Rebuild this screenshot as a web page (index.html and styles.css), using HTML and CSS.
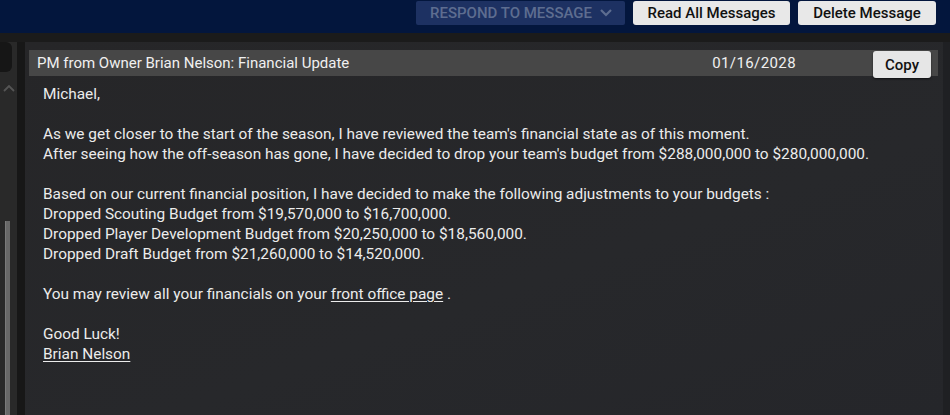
FILE: index.html
```html
<!DOCTYPE html>
<html>
<head>
<meta charset="utf-8">
<link rel="stylesheet" href="styles.css">
</head>
<body>
<div class="topbar">
  <div class="respond">
    <span class="respond-label">RESPOND TO MESSAGE</span>
    <svg class="chev" width="14" height="10" viewBox="0 0 14 10"><path d="M2 2 L7 7 L12 2" fill="none" stroke="#5d6d90" stroke-width="2.2"/></svg>
  </div>
  <button class="btn">Read All Messages</button>
  <button class="btn btn-del">Delete Message</button>
</div>
<div class="gap-band"></div>
<div class="main">
  <div class="sidebar">
    <div class="side-box"></div>
    <svg class="side-up" width="12" height="8" viewBox="0 0 12 8"><path d="M1 7 L6 2 L11 7" fill="none" stroke="#555" stroke-width="1.8"/></svg>
    <div class="side-track"><div class="side-thumb"></div></div>
  </div>
  <div class="divider"></div>
  <div class="panel">
    <div class="msg-head">
      <span class="subject">PM from Owner Brian Nelson: Financial Update</span>
      <span class="date">01/16/2028</span>
      <button class="copy">Copy</button>
    </div>
    <div class="msg-body">
      <p>Michael,</p>
      <p>As we get closer to the start of the season, I have reviewed the team's financial state as of this moment.<br>After seeing how the off-season has gone, I have decided to drop your team's budget from $288,000,000 to $280,000,000.</p>
      <p>Based on our current financial position, I have decided to make the following adjustments to your budgets :<br>Dropped Scouting Budget from $19,570,000 to $16,700,000.<br>Dropped Player Development Budget from $20,250,000 to $18,560,000.<br>Dropped Draft Budget from $21,260,000 to $14,520,000.</p>
      <p>You may review all your financials on your <a class="lnk" href="#">front office page</a> .</p>
      <p>Good Luck!<br><a class="lnk" href="#">Brian Nelson</a></p>
    </div>
  </div>
  <div class="right-strip"></div>
</div>
</body>
</html>
```
FILE: styles.css
```css
* { box-sizing: border-box; }
html, body { margin: 0; padding: 0; }
body {
  width: 950px;
  height: 415px;
  overflow: hidden;
  background: #1c1c1c;
  font-family: Roboto, "Liberation Sans", sans-serif;
  display: flex;
  flex-direction: column;
}
.topbar {
  height: 33px;
  background: #03163d;
  display: flex;
  justify-content: flex-end;
  align-items: flex-start;
  padding: 1px 14px 0 0;
  gap: 8px;
  flex-shrink: 0;
}
.respond {
  width: 209px;
  height: 24px;
  background: #1d3162;
  border-radius: 2px;
  display: flex;
  align-items: center;
  padding: 0 12px 0 14px;
  justify-content: space-between;
}
.respond-label {
  color: #5d6d90;
  font-size: 15px;
  font-weight: 500;
}
.btn {
  height: 24px;
  background: #e8e8e8;
  border: none;
  border-radius: 3px;
  font-family: Roboto, "Liberation Sans", sans-serif;
  font-size: 15px;
  font-weight: 500;
  color: #111;
  padding: 0;
  width: 157px;
}
.btn-del { width: 138px; }
.gap-band { height: 9px; flex-shrink: 0; background: #1b1b1b; }
.main {
  flex: 1;
  display: flex;
}
.sidebar {
  width: 17px;
  background: #292929;
  position: relative;
  display: flex;
  flex-direction: column;
}
.side-box {
  width: 12px;
  height: 30px;
  background: #161616;
  border-radius: 0 6px 6px 0;
}
.side-up { margin: 12px 0 0 3px; }
.side-track { flex: 1; position: relative; }
.side-thumb {
  position: absolute;
  left: 5px;
  top: 129px;
  bottom: 0;
  width: 5px;
  background: #686868;
  border-left: 1px solid #7a7a7a;
}
.divider { width: 8px; background: #171717; }
.panel {
  flex: 1;
  background: linear-gradient(160deg, #262628 0%, #27282b 60%, #25262a 100%);
  padding: 8px 5px 0 4px;
}
.msg-head {
  height: 26px;
  background: #474747;
  display: flex;
  align-items: center;
  padding: 0 7px 0 8px;
  color: #f0f0f0;
  font-size: 15px;
}
.subject { flex: 1; }
.date { margin-right: 77px; letter-spacing: 0.4px; }
.copy {
  align-self: flex-start;
  margin-top: 1px;
  height: 27px;
  width: 58px;
  background: #e6e6e6;
  border: none;
  border-radius: 3px;
  box-shadow: 0 1px 2px rgba(0,0,0,0.6);
  font-family: Roboto, "Liberation Sans", sans-serif;
  font-size: 15px;
  font-weight: 500;
  color: #111;
  padding: 0;
}
.msg-body {
  padding: 8px 0 0 14px;
  color: #ececec;
  font-size: 15.4px;
  line-height: 20px;
}
.msg-body p { margin: 0 0 20px 0; }
.lnk { color: #ececec; text-decoration: underline; text-underline-offset: 2px; }
.right-strip { width: 7px; background: #1f2023; }
```
